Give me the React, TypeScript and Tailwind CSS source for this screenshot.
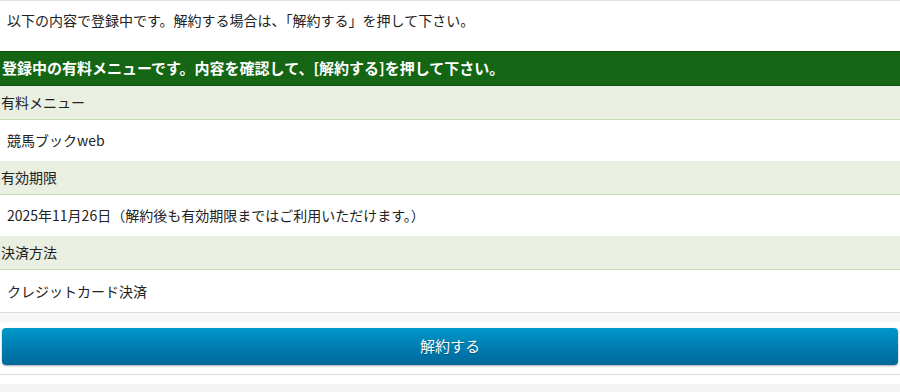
import React from 'react';

const rows = [
  { label: '有料メニュー', value: '競馬ブックweb' },
  { label: '有効期限', value: '2025年11月26日（解約後も有効期限まではご利用いただけます。）' },
  { label: '決済方法', value: 'クレジットカード決済' },
];

const App: React.FC = () => {
  return (
    <div
      className="w-[900px] h-[392px] bg-[#f3f3f3] overflow-hidden text-[#222] text-[14px]"
      style={{ fontFamily: '"Noto Sans CJK JP", "Noto Sans", sans-serif' }}
    >
      <div className="bg-white border-t border-[#e2e2e2]">
        <p className="h-[50px] pl-[7px] pt-[8px] leading-[22px]">
          以下の内容で登録中です。解約する場合は、「解約する」を押して下さい。
        </p>

        <div className="h-[35px] bg-[#146614] border-y border-[#0f4f0f] pl-[2px] flex items-center text-white font-bold text-[15px]">
          登録中の有料メニューです。内容を確認して、[解約する]を押して下さい。
        </div>

        {rows.map((row, idx) => (
          <div key={idx}>
            <div className="h-[34px] bg-[#e9efe1] border-b border-[#c6dcb5] pl-[1px] flex items-center">
              {row.label}
            </div>
            <div
              className={`h-[41px] pl-[7px] flex items-center ${idx === rows.length - 1 ? 'border-b border-[#dddddd] h-[43px]' : ''}`}
            >
              {row.value}
            </div>
          </div>
        ))}

        <div className="h-[9px] bg-[#f7f7f7]" />
        <div className="px-[2px] pt-[6px] pb-[9px] border-b border-[#dddddd]">
          <button
            className="w-full h-[37px] rounded-[4px] bg-gradient-to-b from-[#0097ca] to-[#00679a] text-white text-[15px] shadow-[0_1px_2px_rgba(0,0,0,0.35)] [text-shadow:0_1px_1px_rgba(0,0,0,0.3)]"
          >
            解約する
          </button>
        </div>
        <div className="h-[9px] bg-white" />
      </div>
    </div>
  );
};

export default App;
